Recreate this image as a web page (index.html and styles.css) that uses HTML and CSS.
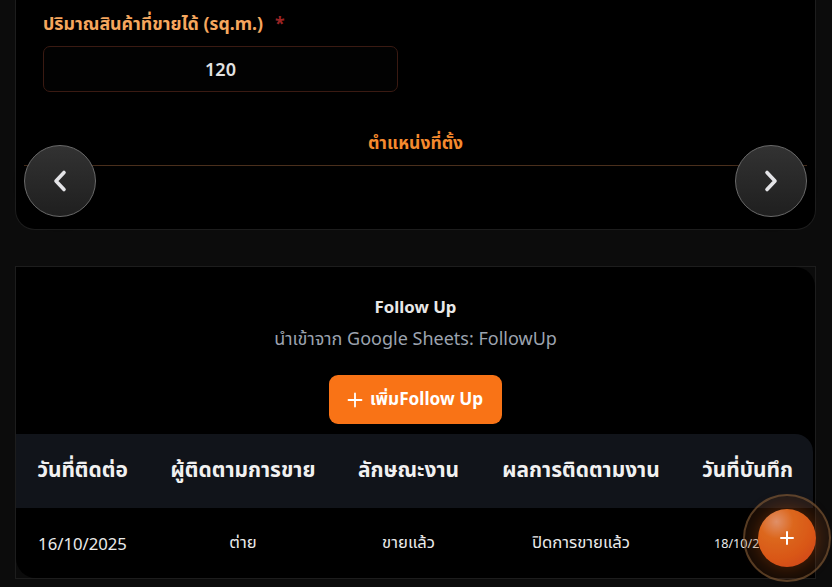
FILE: index.html
```html
<!DOCTYPE html>
<html lang="th">
<head>
<meta charset="utf-8">
<title>Follow Up</title>
<link rel="stylesheet" href="styles.css">
</head>
<body>
<div class="page">
  <section class="card card-top">
    <div class="form-grid">
      <div class="field">
        <label class="field-label">ปริมาณสินค้าที่ขายได้ (sq.m.)<span class="req">*</span></label>
        <div class="input">120</div>
      </div>
    </div>
    <div class="location">
      <h3 class="location-title">ตำแหน่งที่ตั้ง</h3>
      <div class="carousel">
        <button class="nav nav-prev" aria-label="previous">
          <svg width="16" height="24" viewBox="0 0 16 24"><path d="M12 3.5 L4 12 L12 20.5" fill="none" stroke="#e4e4e7" stroke-width="3.6" stroke-linecap="round" stroke-linejoin="round"/></svg>
        </button>
        <button class="nav nav-next" aria-label="next">
          <svg width="16" height="24" viewBox="0 0 16 24"><path d="M4 3.5 L12 12 L4 20.5" fill="none" stroke="#e4e4e7" stroke-width="3.6" stroke-linecap="round" stroke-linejoin="round"/></svg>
        </button>
      </div>
    </div>
  </section>

  <section class="card card-follow">
    <div class="panel">
      <h2 class="fu-title">Follow Up</h2>
      <p class="fu-sub">นำเข้าจาก Google Sheets: FollowUp</p>
      <div class="fu-actions">
        <button class="btn-add">
          <svg width="16" height="16" viewBox="0 0 16 16"><path d="M8 1.5 V14.5 M1.5 8 H14.5" stroke="#fff" stroke-width="1.8" stroke-linecap="round"/></svg>
          <span>เพิ่มFollow Up</span>
        </button>
      </div>
      <div class="table-wrap">
        <table class="fu-table">
          <colgroup>
            <col class="c1"><col class="c2"><col class="c3"><col class="c4"><col class="c5">
          </colgroup>
          <thead>
            <tr>
              <th>วันที่ติดต่อ</th>
              <th>ผู้ติดตามการขาย</th>
              <th>ลักษณะงาน</th>
              <th>ผลการติดตามงาน</th>
              <th>วันที่บันทึก</th>
            </tr>
          </thead>
          <tbody>
            <tr>
              <td>16/10/2025</td>
              <td>ต่าย</td>
              <td>ขายแล้ว</td>
              <td>ปิดการขายแล้ว</td>
              <td class="small">18/10/2025</td>
            </tr>
          </tbody>
        </table>
      </div>
    </div>
  </section>
</div>

<button class="fab" aria-label="add">
  <svg width="16" height="16" viewBox="0 0 16 16"><path d="M8 2 V14 M2 8 H14" stroke="#fff" stroke-width="2" stroke-linecap="round"/></svg>
</button>
</body>
</html>
```

FILE: styles.css
```css
* { box-sizing: border-box; }

html, body {
  margin: 0;
  padding: 0;
  background: #0c0c0c;
  font-family: "Noto Sans", "Noto Sans Thai", "Liberation Sans", sans-serif;
  color: #e5e5e5;
  overflow: hidden;
}

.page {
  padding: 0 16px 0 15px;
}

.card {
  border: 1px solid #1d1d1d;
  background: #000;
}

.card-top {
  border-top: 0;
  border-radius: 0 0 20px 20px;
  padding: 12px 8px 34px;
}

.form-grid {
  display: grid;
  grid-template-columns: 355px 1fr;
  padding: 0 19px;
}

.field-label {
  display: block;
  font-size: 17.8px;
  line-height: 22px;
  font-weight: 700;
  color: #f6a75e;
  white-space: nowrap;
}

.req {
  color: #9b2424;
  margin-left: 12px;
}

.input {
  margin-top: 12px;
  height: 46px;
  border: 1px solid #3a1a12;
  border-radius: 7px;
  background: #020202;
  display: flex;
  align-items: center;
  justify-content: center;
  font-size: 18px;
  font-weight: 600;
  color: #e2e2e2;
}

.location {
  margin-top: 38px;
}

.location-title {
  margin: 0;
  text-align: center;
  font-size: 17.5px;
  line-height: 24px;
  font-weight: 700;
  color: #f58a2e;
}

.carousel {
  position: relative;
  margin-top: 11px;
  height: 30px;
  border-top: 1px solid #4a2f1c;
}

.nav {
  position: absolute;
  top: 50%;
  width: 72px;
  height: 72px;
  margin-top: -36px;
  border-radius: 50%;
  border: 1px solid #6a6a6a;
  background: linear-gradient(180deg, #323232 0%, #1f1f1f 100%);
  box-shadow: 0 4px 10px rgba(0,0,0,0.6);
  display: flex;
  align-items: center;
  justify-content: center;
  padding: 0;
}

.nav-prev { left: 0; }
.nav-next { right: 0; }

.card-follow {
  margin-top: 36px;
  background: #0b0b0b;
}

.panel {
  background: #000;
  border-radius: 0 20px 0 20px;
  padding-top: 28px;
}

.fu-title {
  margin: 0;
  text-align: center;
  font-size: 16.8px;
  line-height: 24px;
  font-weight: 700;
  color: #e8e8e8;
}

.fu-sub {
  margin: 7px 0 0;
  text-align: center;
  font-size: 18px;
  line-height: 24px;
  color: #9ca3af;
}

.fu-actions {
  margin-top: 25px;
  display: flex;
  justify-content: center;
}

.btn-add {
  display: flex;
  align-items: center;
  gap: 7px;
  height: 49px;
  padding: 0 19px 0 18px;
  border: 0;
  border-radius: 9px;
  background: #f97316;
  color: #fff;
  font-family: inherit;
  font-size: 17.2px;
  font-weight: 700;
}

.table-wrap {
  margin-top: 10px;
  margin-right: 2px;
  border-top-right-radius: 18px;
  overflow: hidden;
}

.fu-table {
  width: 100%;
  border-collapse: collapse;
  table-layout: fixed;
}

.c1 { width: 133px; }
.c2 { width: 188px; }
.c3 { width: 143px; }
.c4 { width: 202px; }
.c5 { width: auto; }

.fu-table th {
  background: #11141a;
  height: 74px;
  padding: 0 0 2px;
  font-size: 20.9px;
  font-weight: 700;
  color: #f1f1f1;
  text-align: center;
  white-space: nowrap;
}

.fu-table td {
  height: 70px;
  padding: 0;
  font-size: 16.7px;
  color: #ebebeb;
  text-align: center;
  white-space: nowrap;
}

.fu-table td.small {
  font-size: 12.6px;
}

.fab {
  position: fixed;
  right: 16px;
  bottom: 20px;
  width: 58px;
  height: 58px;
  border-radius: 50%;
  border: 0;
  padding: 0;
  background: radial-gradient(circle at 32% 22%, #f7a27a 0%, #f2711f 28%, #ee5d17 62%, #e0401c 100%);
  display: flex;
  align-items: center;
  justify-content: center;
  box-shadow: 0 0 18px rgba(240, 100, 20, 0.35);
}

.fab::before {
  content: "";
  position: absolute;
  inset: -15px;
  border-radius: 50%;
  border: 2px solid rgba(140, 100, 60, 0.55);
  background: rgba(120, 60, 20, 0.18);
  z-index: -1;
}
```
